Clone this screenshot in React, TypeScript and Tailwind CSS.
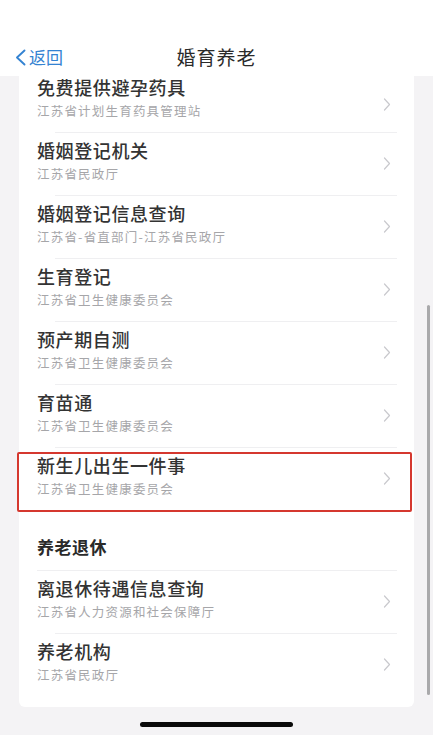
import React from "react";

interface Item {
	title: string
	sub: string
	marked?: boolean
}

const marriage: Item[] = [
	{ title: "婚姻登记机关", sub: "江苏省民政厅" },
	{ title: "婚姻登记信息查询", sub: "江苏省-省直部门-江苏省民政厅" },
	{ title: "生育登记", sub: "江苏省卫生健康委员会" },
	{ title: "预产期自测", sub: "江苏省卫生健康委员会" },
	{ title: "育苗通", sub: "江苏省卫生健康委员会" },
	{ title: "新生儿出生一件事", sub: "江苏省卫生健康委员会", marked: true },
]

const pension: Item[] = [
	{ title: "离退休待遇信息查询", sub: "江苏省人力资源和社会保障厅" },
	{ title: "养老机构", sub: "江苏省民政厅" },
]

function Chevron() {
	return (
		<svg width="8" height="13" viewBox="0 0 8 13" className="shrink-0">
			<polyline points="1.5,1 6.5,6.5 1.5,12" fill="none" stroke="#c9c9cd" strokeWidth="1.2" strokeLinecap="round" strokeLinejoin="round" />
		</svg>
	)
}

function Row(props: { item: Item, first?: boolean, line?: boolean }) {
	const { item } = props
	return (
		<div className={`relative flex items-center pl-[18px] pr-[23px] ${props.first ? "h-[56px]" : "h-[63px]"}`}>
			{props.line && <div className="absolute top-0 left-[36px] right-[17px] h-px bg-[#efeff1]" />}
			<div className={`flex-1 flex flex-col ${props.first ? "-mt-[13px]" : "-mt-[5px]"}`}>
				<div className="text-[18px] leading-[22px] tracking-[0.6px] text-[#333333] font-medium">{item.title}</div>
				<div className="mt-[4px] text-[12.5px] leading-[18px] tracking-[1.2px] text-[#a6a6a9]">{item.sub}</div>
			</div>
			<Chevron />
			{item.marked && <div className="absolute left-[-2px] right-[2px] top-[5px] bottom-[-2px] border-2 border-[#d5382f] rounded-[2px]" />}
		</div>
	)
}

export default function App() {
	return (
		<div className="relative w-[433px] h-[735px] overflow-hidden bg-[#f4f3f5] flex flex-col" style={{ fontFamily: '"Noto Sans CJK SC", "Noto Sans", sans-serif' }}>

			<div className="h-[76px] shrink-0 bg-white relative flex items-end pb-[7px]">
				<div className="flex items-center pl-[15px] text-[#3483d2] text-[17px] leading-[24px]">
					<svg width="11" height="17" viewBox="0 0 11 17" className="mr-[3px]">
						<polyline points="9.5,1.5 2,8.5 9.5,15.5" fill="none" stroke="#3483d2" strokeWidth="1.9" strokeLinecap="round" strokeLinejoin="round" />
					</svg>
					返回
				</div>
				<div className="absolute left-0 right-0 bottom-[7px] text-center text-[19px] leading-[24px] tracking-[1px] text-[#2a2a2a]">婚育养老</div>
			</div>

			<div className="mx-[19px] bg-white rounded-b-[6px] pb-[11px]">
				<Row item={{ title: "免费提供避孕药具", sub: "江苏省计划生育药具管理站" }} first />
				{marriage.map(m => <Row key={m.title} item={m} line />)}

				<div className="h-[60px] flex items-end pb-[11px] pl-[18px] text-[17px] leading-[24px] font-bold text-[#2a2a2a] tracking-[0.5px]">养老退休</div>
				<div className="relative">
					<div className="absolute top-0 left-[18px] right-[17px] h-px bg-[#efeff1]" />
				</div>
				{pension.map((m, i) => <Row key={m.title} item={m} line={i !== 0} />)}
			</div>

			<div className="flex-1 flex justify-center items-start pt-[15px]">
				<div className="w-[153px] h-[5px] rounded-full bg-[#0a0a0a]" />
			</div>

			<div className="absolute right-[3px] top-[305px] w-[3px] h-[390px] rounded-full bg-[#a9a9ab]" />
		</div>
	)
}
